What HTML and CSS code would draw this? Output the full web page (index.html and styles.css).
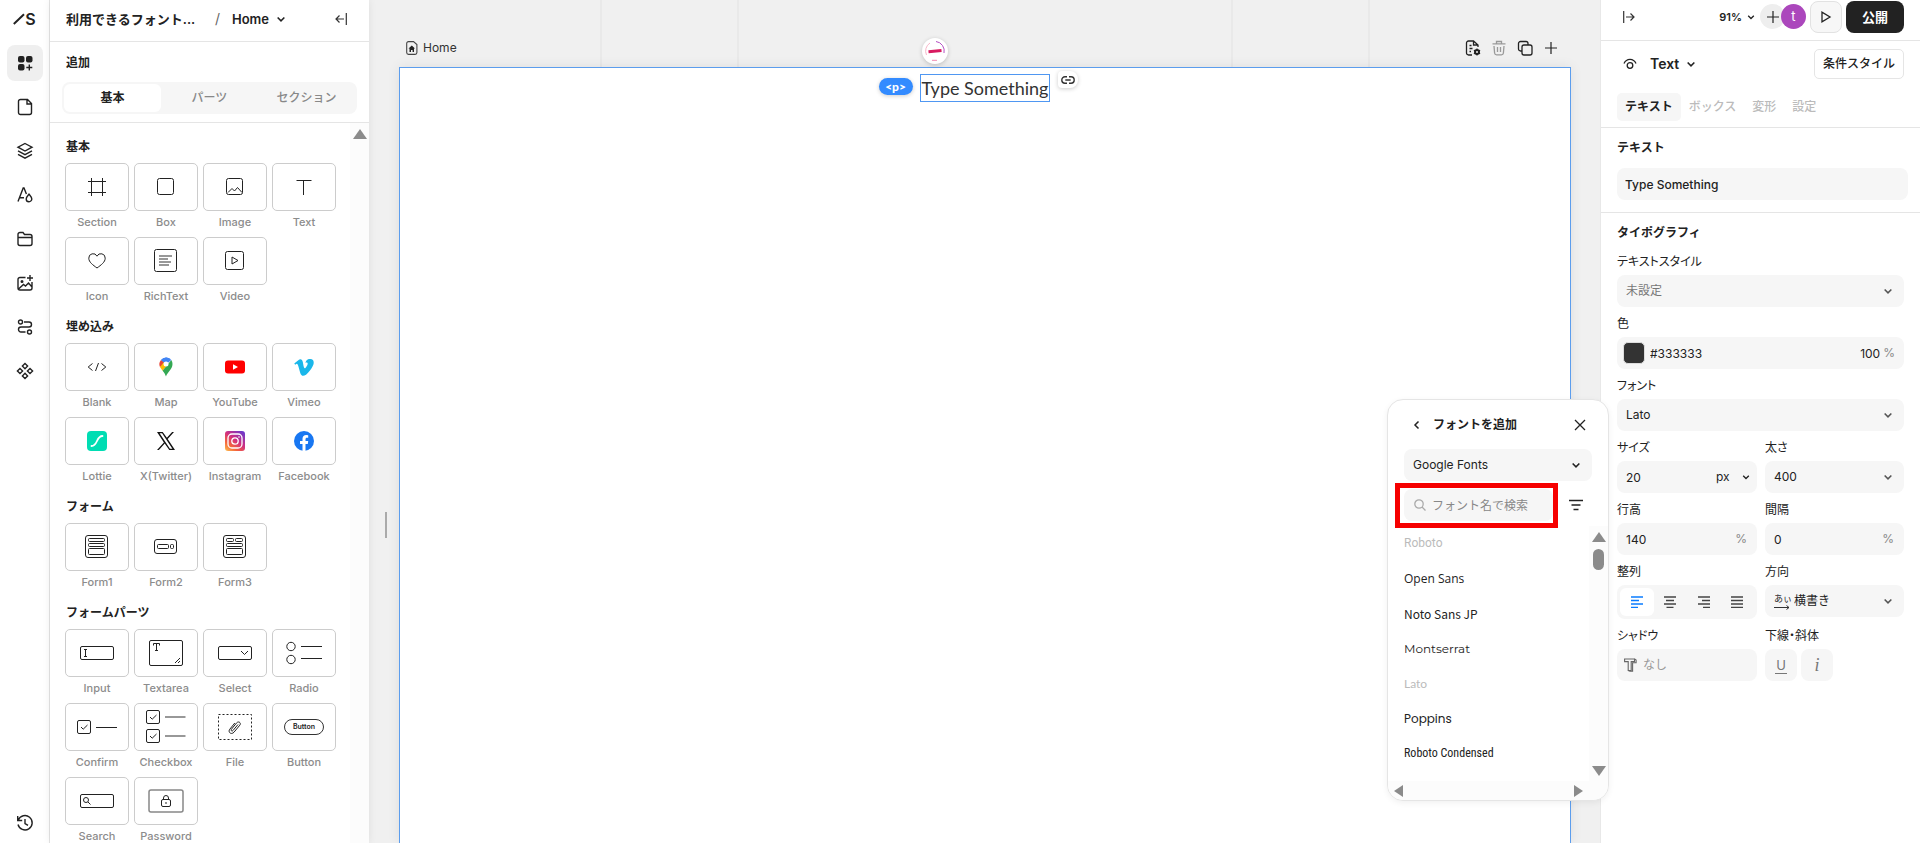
FILE: index.html
```html
<!DOCTYPE html>
<html lang="ja">
<head>
    <meta charset="UTF-8">
    <meta name="viewport" content="width=device-width, initial-scale=1.0">
    <title>Home</title>
    <link rel="stylesheet" href="styles.css">
</head>
<body>
    <!-- shared icons -->
    <svg class="defs" width="0" height="0">
        <symbol id="chevron" viewBox="0 0 10 10"><path d="M2.2 3.700l2.800 2.800 2.800-2.800" fill="none" stroke="currentColor" stroke-width="1.300"/></symbol>
        <symbol id="plus" viewBox="0 0 12 12"><path d="M6 0v12M0 6h12" fill="none" stroke="currentColor" stroke-width="1.200"/></symbol>
        <symbol id="check" viewBox="0 0 14 14"><rect x=".5" y=".5" width="13" height="13" rx="1.5"/><path d="M4 7l2.2 2.2L10.5 5"/></symbol>
    </svg>

    <nav class="rail">
        <a class="logo" href="#" aria-label="Studio"><svg width="12" height="12" viewBox="0 0 12 12"><path d="M.8 11L11 1.2" stroke="#222" stroke-width="2" fill="none"/></svg><span>S</span></a>
        <button class="rail-btn active" aria-label="追加">
            <svg width="16" height="16" viewBox="0 0 16 16" fill="#222"><rect x="1" y="1" width="6.5" height="6.5" rx="2"/><rect x="9" y="1" width="6.5" height="6.5" rx="2"/><rect x="1" y="9" width="6.5" height="6.5" rx="2"/><path d="M11.600 9.500h1.400v2.300h2.300v1.400H13v2.300h-1.400v-2.300H9.300v-1.400h2.300z"/></svg>
        </button>
        <button class="rail-btn" aria-label="ページ">
            <svg width="16" height="18" viewBox="0 0 16 18"><path d="M3.5 1.5h7l4 4v9a2 2 0 0 1-2 2h-9a2 2 0 0 1-2-2v-11a2 2 0 0 1 2-2zM10 1.5V6h4.5"/></svg>
        </button>
        <button class="rail-btn" aria-label="レイヤー">
            <svg width="18" height="18" viewBox="0 0 18 18"><path d="M9 1.5l7 3.7-7 3.8-7-3.8zM2 8.8l7 3.8 7-3.8M2 12.3l7 3.9 7-3.9"/></svg>
        </button>
        <button class="rail-btn" aria-label="スタイル">
            <svg width="18" height="18" viewBox="0 0 18 18"><path d="M2 15.5L7.2 2h.8l2.4 6M3.4 11.7H8M13 8.2c1.500 1.800 2.800 3 2.800 4.700a2.800 2.800 0 0 1-5.600 0c0-1.700 1.300-2.900 2.800-4.700z"/></svg>
        </button>
        <button class="rail-btn" aria-label="ファイル">
            <svg width="18" height="18" viewBox="0 0 18 18"><path d="M2 13.500v-9a2 2 0 0 1 2-2h3l1.500 2H14a2 2 0 0 1 2 2v7a2 2 0 0 1-2 2H4a2 2 0 0 1-2-2zM2 7.500h14"/></svg>
        </button>
        <button class="rail-btn" aria-label="画像">
            <svg width="18" height="18" viewBox="0 0 18 18"><path d="M9.500 3.500H4a2 2 0 0 0-2 2V14a2 2 0 0 0 2 2h10a2 2 0 0 0 2-2V8M2.500 15l5-4.500 2 1.500 3-3L16 13M14 1v6M11 4h6"/><circle cx="6" cy="7.500" r=".8"/></svg>
        </button>
        <button class="rail-btn" aria-label="フロー">
            <svg width="16" height="16" viewBox="0 0 16 16"><circle cx="3.500" cy="3" r="2"/><circle cx="12.500" cy="13" r="2"/><path d="M7 3h5a2.500 2.500 0 0 1 0 5H4a2.500 2.500 0 0 0 0 5h4.500"/></svg>
        </button>
        <button class="rail-btn" aria-label="コンポーネント">
            <svg width="18" height="18" viewBox="0 0 18 18"><path d="M9 1.500l2.600 2.600L9 6.700 6.400 4.100zM4 6.400L6.600 9 4 11.600 1.400 9zM14 6.400L16.600 9 14 11.600 11.400 9zM9 11.300l2.600 2.600L9 16.500l-2.600-2.600z"/></svg>
        </button>
        <button class="rail-btn history" aria-label="履歴">
            <svg width="18" height="18" viewBox="0 0 18 18"><path d="M2.300 6A7.200 7.200 0 1 1 2 10.500M1.700 2v4.500h4.500M9 5v4.500l3 1.800"/></svg>
        </button>
    </nav>

    <aside class="add-panel">
        <header class="panel-head">
            <span class="project">利用できるフォント...</span>
            <span class="slash">/</span>
            <button class="page-btn">Home <svg width="12" height="12"><use href="#chevron"/></svg></button>
            <button class="icon-btn collapse" aria-label="閉じる"><svg width="12" height="12" viewBox="0 0 12 12"><path d="M11.300 0v12M9 6H1M4.500 2.500L1 6l3.500 3.500" fill="none" stroke="#333" stroke-width="1.200"/></svg></button>
        </header>
        <div class="add-head">
            <h2>追加</h2>
            <div class="segment">
                <button class="active">基本</button>
                <button>パーツ</button>
                <button>セクション</button>
            </div>
        </div>
        <div class="scroll">
            <div class="groups">
                <h3>基本</h3>
                <div class="tiles">
                    <button class="tile"><span><svg width="20" height="20" viewBox="0 0 20 20"><path d="M4.500 1v18M15.500 1v18M1 4.500h18M1 15.500h18"/></svg></span>Section</button>
                    <button class="tile"><span><svg width="18" height="18" viewBox="0 0 18 18"><rect x=".5" y=".5" width="16" height="16" rx="2"/></svg></span>Box</button>
                    <button class="tile"><span><svg width="18" height="18" viewBox="0 0 18 18"><rect x=".5" y=".5" width="16" height="16" rx="2"/><path d="M2 14.500l4-4 2.500 2.500 3-3.500 4.500 5"/></svg></span>Image</button>
                    <button class="tile"><span><svg width="16" height="16" viewBox="0 0 16 16"><path d="M.500 1.500h15M7.500 1.500V16"/></svg></span>Text</button>
                    <button class="tile"><span><svg width="18" height="16" viewBox="0 0 18 16"><path d="M9 15C5 12 .8 9.200.8 5.200A4.300 4.300 0 0 1 9 3.200a4.300 4.300 0 0 1 8.200 2C17.200 9.200 13 12 9 15z"/></svg></span>Icon</button>
                    <button class="tile"><span><svg width="24" height="24" viewBox="0 0 24 24"><rect x=".5" y=".5" width="22" height="22" rx="2"/><path d="M5 7h13M5 10h9M5 13h12M5 16h10" stroke="#777" stroke-width="1.600"/></svg></span>RichText</button>
                    <button class="tile"><span><svg width="20" height="20" viewBox="0 0 20 20"><rect x=".5" y=".5" width="18" height="18" rx="2"/><path d="M7 6v7l6-3.500z"/></svg></span>Video</button>
                </div>
                <h3>埋め込み</h3>
                <div class="tiles">
                    <button class="tile"><span><svg width="20" height="10" viewBox="0 0 20 10"><path d="M5.500 1.500L1.200 5l4.300 3.500M14.500 1.500L18.800 5l-4.300 3.500M11.500 1l-3 8"/></svg></span>Blank</button>
                    <button class="tile"><span><svg class="logo-svg" width="14" height="20" viewBox="0 0 14 20"><path d="M7 .5A6.500 6.500 0 0 0 2 3l5 4.500L11.500 2A6.500 6.500 0 0 0 7 .5z" fill="#4285f4"/><path d="M2 3a6.500 6.500 0 0 0-1 7l6-3.500z" fill="#ea4335"/><path d="M1 10l2.600 3.700L10 6.500 5 5z" fill="#fbbc04"/><path d="M3.600 13.700C5.500 16 6 17 7 19.500c1-4 6.500-7 6.500-12.500A6.500 6.500 0 0 0 12.300 3z" fill="#34a853"/><path d="M7 7.500L2 3A6.500 6.500 0 0 1 12.300 3z" fill="#4285f4"/><circle cx="7" cy="7" r="2.500" fill="#fff"/></svg></span>Map</button>
                    <button class="tile"><span><svg class="logo-svg" width="20" height="14" viewBox="0 0 20 14"><rect y=".5" width="20" height="13" rx="3" fill="#f00"/><path d="M8 4.200v5.600L13 7z" fill="#fff"/></svg></span>YouTube</button>
                    <button class="tile"><span><svg class="logo-svg" width="20" height="17" viewBox="0 0 24 21"><path d="M24 4.800c-.1 2.300-1.700 5.500-4.900 9.600C15.800 18.700 13 20.800 10.800 20.800c-1.400 0-2.600-1.300-3.500-3.900L5.300 9.800C4.600 7.200 3.800 5.900 3 5.900c-.2 0-.8.400-1.900 1.100L0 5.600C3.200 2.800 5.600.4 7.100.2c1.900-.2 3 1.100 3.500 3.800C11.700 10.500 12.200 11.500 13.200 11.500c.8 0 3.200-3.900 3.300-5.300.2-2-1.500-2-2.900-1.400C14.700 1.300 16.800-.5 19.900 0c2.800.2 4.200 1.700 4.100 4.800z" fill="#1ab7ea"/></svg></span>Vimeo</button>
                    <button class="tile"><span><svg class="logo-svg" width="20" height="20" viewBox="0 0 20 20"><rect width="20" height="20" rx="4" fill="#00ddb3"/><path d="M4.500 15c6.500 0 4.500-10 11-10" fill="none" stroke="#fff" stroke-width="1.800" stroke-linecap="round"/></svg></span>Lottie</button>
                    <button class="tile"><span><svg class="logo-svg" width="18" height="18" viewBox="0 0 18 18"><path d="M0 0h5.700l4.200 5.700L15.100 0h1.900l-6.300 6.900L18 18h-5.700L7.700 11.600 1.900 18H0l6.900-7.500zM2.600 1.300l10.300 15.400h2.500L5.100 1.300z" fill="#111" fill-rule="evenodd"/></svg></span>X(Twitter)</button>
                    <button class="tile"><span><svg class="logo-svg" width="20" height="20" viewBox="0 0 20 20"><defs><linearGradient id="insta" x1="0" y1="1" x2=".8" y2="0"><stop offset="0" stop-color="#fec04f"/><stop offset=".3" stop-color="#f4643c"/><stop offset=".6" stop-color="#d12f80"/><stop offset="1" stop-color="#7038c8"/></linearGradient></defs><rect width="20" height="20" rx="3" fill="url(#insta)"/><g fill="none" stroke="#fff" stroke-width="1.300"><rect x="3" y="3" width="14" height="14" rx="4"/><circle cx="10" cy="10" r="3.200"/></g><circle cx="14" cy="6" r=".8" fill="#fff"/></svg></span>Instagram</button>
                    <button class="tile"><span><svg class="logo-svg" width="20" height="20" viewBox="0 0 20 20"><circle cx="10" cy="10" r="10" fill="#1877f2"/><path d="M8.500 20v-7H6v-3h2.500V7.800C8.500 5.300 10 4 12.200 4l2 .2v2.500H13c-1.100 0-1.500.7-1.500 1.400V10h2.700l-.4 3h-2.300v7z" fill="#fff"/></svg></span>Facebook</button>
                </div>
                <h3>フォーム</h3>
                <div class="tiles">
                    <button class="tile"><span><svg width="24" height="24" viewBox="0 0 24 24"><rect x=".5" y=".5" width="22" height="22" rx="2.500"/><rect x="3.500" y="3.500" width="16" height="3" rx="1"/><rect x="3.500" y="8.500" width="16" height="3" rx="1"/><rect x="3.500" y="13.500" width="16" height="6" rx="1"/></svg></span>Form1</button>
                    <button class="tile"><span><svg width="24" height="16" viewBox="0 0 24 16"><rect x=".5" y=".5" width="22" height="14" rx="2.500"/><rect x="3.500" y="5.500" width="11" height="4" rx="1"/><rect x="16.500" y="5.500" width="3" height="4" rx="1"/></svg></span>Form2</button>
                    <button class="tile"><span><svg width="24" height="24" viewBox="0 0 24 24"><rect x=".5" y=".5" width="22" height="22" rx="2.500"/><rect x="3.500" y="3.500" width="7" height="3" rx="1"/><rect x="12.500" y="3.500" width="7" height="3" rx="1"/><rect x="3.500" y="8.500" width="16" height="3" rx="1"/><rect x="3.500" y="13.500" width="16" height="6" rx="1"/></svg></span>Form3</button>
                </div>
                <h3>フォームパーツ</h3>
                <div class="tiles">
                    <button class="tile"><span><svg width="34" height="14" viewBox="0 0 34 14"><rect x=".5" y=".5" width="33" height="13" rx="1.500"/><path d="M4 3.500h3M4 10.500h3M5.500 3.500v7"/></svg></span>Input</button>
                    <button class="tile"><span><svg width="34" height="26" viewBox="0 0 34 26"><rect x=".5" y=".5" width="33" height="25" rx="1.500"/><path d="M4.500 5.500v-2h6v2M7.500 3.500v7M6 10.500h3M26 23l5-5M29 23l2-2"/></svg></span>Textarea</button>
                    <button class="tile"><span><svg width="34" height="14" viewBox="0 0 34 14"><rect x=".5" y=".5" width="33" height="13" rx="1.500"/><path d="M23 5l3.500 3.500L30 5"/></svg></span>Select</button>
                    <button class="tile"><span><svg width="36" height="24" viewBox="0 0 36 24"><circle cx="5" cy="5.500" r="4.200"/><circle cx="5" cy="18.500" r="4.200"/><path d="M15 5.500h21M15 17.500h21"/></svg></span>Radio</button>
                    <button class="tile"><span><svg width="40" height="14" viewBox="0 0 40 14"><use href="#check" width="14" height="14"/><path d="M19 7.500h21"/></svg></span>Confirm</button>
                    <button class="tile"><span><svg width="40" height="34" viewBox="0 0 40 34"><use href="#check" width="14" height="14"/><use href="#check" y="19" width="14" height="14"/><path d="M19 7h20.500M19 26h20.500" stroke="#777" stroke-width="1.600"/></svg></span>Checkbox</button>
                    <button class="tile"><span><svg width="34" height="26" viewBox="0 0 34 26"><rect x=".5" y=".5" width="33" height="25" stroke-dasharray="2 2"/><path d="M20 10.500l-5 6c-1 1.200-2.500 0-1.600-1.200l5.200-6.400c2-2.200 5 0 3.200 2.300l-5.800 7c-2.600 3-6.500 0-4.200-3l5-6.200"/></svg></span>File</button>
                    <button class="tile"><span><b class="mini-btn">Button</b></span>Button</button>
                    <button class="tile"><span><svg width="34" height="14" viewBox="0 0 34 14"><rect x=".5" y=".5" width="33" height="13" rx="1.500"/><circle cx="6" cy="6" r="2.500"/><path d="M8 8l2.500 2.500"/></svg></span>Search</button>
                    <button class="tile"><span><svg width="36" height="24" viewBox="0 0 36 24"><rect x="1" y="1" width="34" height="22" rx="2" stroke="#888" stroke-width="1.500"/><rect x="13.500" y="10.500" width="9" height="7" rx="1.500"/><path d="M15.500 10.500v-1.500a2.500 2.500 0 0 1 5 0v1.500M18 13v2"/></svg></span>Password</button>
                </div>
            </div>
            <div class="bar-v"><i class="up"></i></div>
        </div>
    </aside>

    <main class="canvas">
        <div class="guide wide"></div>
        <div class="guide narrow"></div>
        <div class="canvas-head">
            <span class="page-name"><svg width="12" height="14" viewBox="0 0 12 14"><path d="M2.500.6h5l3.400 3v8a1.800 1.800 0 0 1-1.800 1.800H2.500A1.800 1.800 0 0 1 .7 11.600V2.400A1.800 1.800 0 0 1 2.500.6z" fill="none" stroke="#444" stroke-width="1.100"/><path d="M5.800 4.500L2.500 7.500h1V11H5V9h1.600v2H8V7.500h1z" fill="#222"/></svg>Home</span>
            <div class="tools">
                <button class="icon-btn" aria-label="ページ設定"><svg width="16" height="16" viewBox="0 0 16 16" fill="none" stroke="#222" stroke-width="1.300"><path d="M7 15H3.500A2 2 0 0 1 1.500 13V3a2 2 0 0 1 2-2h5L13 5v2M8.500 1v4H13M4.500 5.500h2M4.500 8.500h3M4.500 11.500h1.500"/><circle cx="12" cy="12" r="2" stroke-width="2"/><path d="M12 8.500v7M8.900 10.200l6.200 3.600M15.100 10.200l-6.200 3.600" stroke-width="1.200"/><circle cx="12" cy="12" r="1" fill="#f0f0f0" stroke="none"/></svg></button>
                <button class="icon-btn" aria-label="削除"><svg width="16" height="16" viewBox="0 0 16 16" fill="none" stroke="#999" stroke-width="1.300"><path d="M1.500 3.800h13M5.500 3.800V1.500h5v2.300M3 6l.6 7a2 2 0 0 0 2 1.800h4.800a2 2 0 0 0 2-1.800L13 6M6.500 7v5M9.500 7v5"/></svg></button>
                <button class="icon-btn" aria-label="複製"><svg width="16" height="16" viewBox="0 0 16 16" fill="none" stroke="#222" stroke-width="1.300"><rect x="5" y="5" width="10" height="10" rx="2"/><path d="M5 11H3.500A2 2 0 0 1 1.500 9V3.500a2 2 0 0 1 2-2H9a2 2 0 0 1 2 2V5"/></svg></button>
                <button class="icon-btn" aria-label="追加"><svg width="12" height="12"><use href="#plus"/></svg></button>
            </div>
        </div>
        <div class="frame">
            <div class="selected">
                <span class="badge logo-badge"><svg width="22" height="22" viewBox="0 0 22 22" fill="none"><path d="M2.500 15A9.500 9.500 0 0 1 6 3" stroke="#f7b6c8"/><path d="M12 1.500A9.500 9.500 0 0 1 20 13" stroke="#b44fc4"/><path d="M8 20.300h5" stroke="#f08ab0"/><path d="M4.500 11.800l13-1.200" stroke="#d81b60" stroke-width="3"/></svg></span>
                <span class="badge tag">&lt;p&gt;</span>
                <p>Type Something</p>
                <span class="badge link-badge"><svg width="14" height="8" viewBox="0 0 14 8" fill="none" stroke="#333" stroke-width="1.400"><path d="M6 .8H4a3.200 3.200 0 0 0 0 6.400h2M8 .8h2a3.200 3.200 0 0 1 0 6.400H8M4.300 4h5.400"/></svg></span>
            </div>
        </div>
        <div class="resize"></div>
    </main>

    <aside class="props">
        <header class="props-head">
            <button class="icon-btn" aria-label="閉じる"><svg width="12" height="12" viewBox="0 0 12 12"><path d="M.7 0v12M3 6h8M7.500 2.500L11 6l-3.500 3.500" fill="none" stroke="#333" stroke-width="1.200"/></svg></button>
            <button class="zoom-btn">91% <svg width="10" height="10"><use href="#chevron"/></svg></button>
            <button class="invite" aria-label="招待"><svg width="12" height="12"><use href="#plus"/></svg></button>
            <span class="avatar">t</span>
            <button class="play" aria-label="プレビュー"><svg width="12" height="12" viewBox="0 0 12 12"><path d="M2 1.200v9.600L10 6z" fill="none" stroke="#222" stroke-width="1.300"/></svg></button>
            <button class="publish">公開</button>
        </header>
        <div class="element-row">
            <svg width="14" height="12" viewBox="0 0 14 12" fill="none" stroke="#222" stroke-width="1.300"><path d="M1 5.500C3.500 0 10.500 0 13 5.500"/><circle cx="7" cy="7.500" r="2.800"/></svg>
            <button class="element-btn">Text <svg width="12" height="12"><use href="#chevron"/></svg></button>
            <button class="cond">条件スタイル</button>
        </div>
        <div class="tabs">
            <button class="active">テキスト</button>
            <button>ボックス</button>
            <button>変形</button>
            <button>設定</button>
        </div>
        <section class="text-section">
            <h3><label for="content">テキスト</label></h3>
            <input class="control" id="content" type="text" value="Type Something">
        </section>
        <section class="typo">
            <h3>タイポグラフィ</h3>
            <div class="field full">
                <label for="style">テキストスタイル</label>
                <div class="control muted"><select id="style"><option>未設定</option></select><svg width="12" height="12"><use href="#chevron"/></svg></div>
            </div>
            <div class="field full">
                <label for="color">色</label>
                <div class="control color"><i class="swatch"></i><input id="color" type="text" value="#333333"><input class="alpha" type="text" value="100" aria-label="不透明度"><span class="unit">%</span></div>
            </div>
            <div class="field full">
                <label for="font">フォント</label>
                <div class="control"><select id="font"><option>Lato</option></select><svg width="12" height="12"><use href="#chevron"/></svg></div>
            </div>
            <div class="field">
                <label for="size">サイズ</label>
                <div class="control size"><input id="size" type="text" value="20"><select class="px" aria-label="単位"><option>px</option></select><svg width="10" height="10"><use href="#chevron"/></svg></div>
            </div>
            <div class="field">
                <label for="weight">太さ</label>
                <div class="control"><select id="weight"><option>400</option></select><svg width="12" height="12"><use href="#chevron"/></svg></div>
            </div>
            <div class="field">
                <label for="line">行高</label>
                <div class="control"><input id="line" type="text" value="140"><span class="unit">%</span></div>
            </div>
            <div class="field">
                <label for="spacing">間隔</label>
                <div class="control"><input id="spacing" type="text" value="0"><span class="unit">%</span></div>
            </div>
            <div class="field">
                <span class="label">整列</span>
                <div class="align">
                    <button class="active" aria-label="左"><svg width="14" height="12" viewBox="0 0 14 12"><path d="M1 1h12M1 4.500h8M1 8h12M1 11.500h7"/></svg></button>
                    <button aria-label="中央"><svg width="14" height="12" viewBox="0 0 14 12"><path d="M1 1h12M3 4.500h8M1 8h12M3.500 11.500h7"/></svg></button>
                    <button aria-label="右"><svg width="14" height="12" viewBox="0 0 14 12"><path d="M1 1h12M5 4.500h8M1 8h12M6 11.500h7"/></svg></button>
                    <button aria-label="両端"><svg width="14" height="12" viewBox="0 0 14 12"><path d="M1 1h12M1 4.500h12M1 8h12M1 11.500h12"/></svg></button>
                </div>
            </div>
            <div class="field">
                <label for="dir">方向</label>
                <div class="control"><span class="dir-icon">あぃ<svg width="16" height="5" viewBox="0 0 16 5"><path d="M0 2.500h15M12.500.5l2.500 2-2.500 2" fill="none" stroke="#333"/></svg></span><select id="dir"><option>横書き</option></select><svg width="12" height="12"><use href="#chevron"/></svg></div>
            </div>
            <div class="field">
                <span class="label">シャドウ</span>
                <button class="control shadow"><svg width="13" height="14" viewBox="0 0 13 14"><path d="M.6 1h9.900v2.600H7.200v8.900H4.200V3.600H.6z" fill="none" stroke="#666" stroke-width="1.100"/><path d="M10.500 1l1.600 1v2.800H8.600v8.500H6L4.200 12.500" fill="none" stroke="#666" stroke-width="1.100"/></svg>なし</button>
            </div>
            <div class="field">
                <span class="label">下線・斜体</span>
                <div class="deco"><button class="u" aria-label="下線"><span>U</span></button><button class="it" aria-label="斜体">i</button></div>
            </div>
        </section>
    </aside>

    <div class="popover">
        <div class="pop-head">
            <button class="icon-btn back" aria-label="戻る"><svg width="12" height="12" viewBox="0 0 12 12"><path d="M7.500 2.500L4 6l3.500 3.500" fill="none" stroke="#222" stroke-width="1.500"/></svg></button>
            <h3>フォントを追加</h3>
            <button class="icon-btn" aria-label="閉じる"><svg width="12" height="12" viewBox="0 0 12 12"><path d="M1 1l10 10M11 1L1 11" fill="none" stroke="#222" stroke-width="1.300"/></svg></button>
        </div>
        <div class="control source"><select aria-label="提供元"><option>Google Fonts</option></select><svg width="12" height="12"><use href="#chevron"/></svg></div>
        <div class="search-row">
            <label class="control search"><svg width="12" height="12" viewBox="0 0 12 12"><circle cx="5" cy="5" r="4.200" fill="none" stroke="#aaa" stroke-width="1.300"/><path d="M8 8l3.500 3.500" stroke="#aaa" stroke-width="1.300"/></svg><input type="text" placeholder="フォント名で検索" aria-label="フォント名で検索"></label>
            <button class="icon-btn" aria-label="絞り込み"><svg width="14" height="12" viewBox="0 0 14 12"><path d="M0 1.500h14M2.500 6h9M4.500 10.500h5" stroke="#222" stroke-width="1.700"/></svg></button>
            <div class="highlight"></div>
        </div>
        <div class="pop-body">
            <ul class="fonts">
                <li class="used f-roboto">Roboto</li>
                <li class="f-open">Open Sans</li>
                <li class="f-noto">Noto Sans JP</li>
                <li class="f-mont">Montserrat</li>
                <li class="used f-lato">Lato</li>
                <li class="f-pop">Poppins</li>
                <li class="f-cond">Roboto Condensed</li>
            </ul>
            <div class="bar-v"><i class="up"></i><i class="thumb"></i><i class="down"></i></div>
        </div>
        <div class="bar-h"><i class="left"></i><i class="right"></i></div>
    </div>
</body>
</html>
```

FILE: styles.css
```css
* { box-sizing: border-box; }
body { display: flex; height: 100vh; margin: 0; overflow: hidden; background: #fff; color: #222; font-family: Inter, "Noto Sans CJK JP", sans-serif; font-size: 12px; line-height: 16px; }
button, input, select { font: inherit; color: inherit; border: 0; background: none; padding: 0; margin: 0; outline: none; }
button { cursor: pointer; }
select { appearance: none; }
h2, h3, p, ul { margin: 0; padding: 0; }
h2, h3 { font-size: 12px; font-weight: 700; line-height: 16px; }
svg { display: block; flex: none; }
.defs { position: absolute; }
.icon-btn { display: flex; align-items: center; justify-content: center; }

/* left rail */
.rail { flex: none; display: flex; flex-direction: column; align-items: center; gap: 8px; width: 50px; padding-bottom: 2px; border-right: 1px solid #e5e5e5; }
.logo { display: flex; align-items: center; height: 37px; color: #222; font-size: 16px; font-weight: 600; text-decoration: none; }
.rail-btn { display: flex; align-items: center; justify-content: center; flex: none; width: 36px; height: 36px; border-radius: 8px; }
.rail-btn.active { background: #efefef; }
.rail-btn svg { fill: none; stroke: #222; stroke-width: 1.4; }
.rail-btn.active svg { fill: #222; stroke: none; }
.history { margin-top: auto; }

/* add panel */
.add-panel { flex: none; display: flex; flex-direction: column; width: 319px; z-index: 1; box-shadow: 0 0 8px rgba(0, 0, 0, .08); background: #fff; }
.panel-head { display: flex; align-items: center; flex: none; height: 42px; padding: 0 22px 4px 16px; border-bottom: 1px solid #e5e5e5; }
.project { width: 149px; font-size: 13px; font-weight: 600; white-space: nowrap; }
.slash { width: 17px; color: #666; font-size: 14px; }
.page-btn { display: flex; align-items: center; gap: 6px; font-size: 13px; font-weight: 600; }
.collapse { margin-left: auto; }
.add-head { display: flex; flex-direction: column; flex: none; gap: 11px; padding: 13px 12px 8px; border-bottom: 1px solid #e5e5e5; }
.add-head h2 { padding-left: 4px; font-weight: 600; }
.segment { display: flex; padding: 2px; border-radius: 8px; background: #f6f6f6; }
.segment button { flex: 1; height: 28px; border-radius: 6px; color: #888; font-weight: 500; }
.segment .active { background: #fff; color: #222; font-weight: 600; }
.scroll { display: flex; flex: 1; min-height: 0; overflow: hidden; }
.groups { flex: 1; padding: 8px 0 0 15px; }
.groups h3 { height: 32px; padding: 8px 0 0 1px; }
.tiles { display: grid; grid-template-columns: repeat(4, 64px); column-gap: 5px; }
.tile { display: flex; flex-direction: column; align-items: center; gap: 3px; height: 74px; color: #8c8c8c; font-size: 11px; font-weight: 500; }
.tile > span { display: flex; align-items: center; justify-content: center; width: 64px; height: 48px; border: 1px solid #ccc; border-radius: 5px; }
.tile svg { fill: none; stroke: #222; stroke-width: 1; }
.tile .logo-svg { stroke: none; }
.mini-btn { padding: 0 8px; border: 1px solid #333; border-radius: 8px; color: #222; font-size: 7px; font-weight: 600; line-height: 14px; }
.bar-v { display: flex; flex-direction: column; align-items: center; flex: none; width: 19px; padding-top: 6px; background: #fcfcfc; }
.up, .down { border: solid transparent; border-width: 0 7px; }
.up { border-bottom: 10px solid #8b8b8b; }
.down { border-top: 10px solid #8b8b8b; }

/* canvas */
.canvas { position: relative; display: flex; flex: 1; flex-direction: column; min-width: 0; padding: 0 29px 0 30px; background: #f0f0f0; overflow: hidden; }
.guide { position: absolute; top: 0; bottom: 0; left: 50%; border: solid #e9e9e9; border-width: 0 2px; transform: translateX(-50%); }
.wide { width: 770px; }
.narrow { width: 496px; }
.canvas-head { position: relative; display: flex; align-items: center; justify-content: space-between; flex: none; height: 67px; padding: 29px 12px 0 7px; }
.page-name { display: flex; align-items: center; gap: 5px; color: #333; }
.tools { display: flex; align-items: center; gap: 10px; }
.tools .icon-btn { width: 16px; }
.frame { position: relative; display: flex; flex: 1; justify-content: center; align-items: flex-start; padding-top: 6px; border: 1px solid #5c9ded; border-bottom: 0; background: #fff; box-shadow: 0 0 12px rgba(0, 0, 0, .08); }
.selected { position: relative; border: 1px solid #4f97f2; }
.selected p { padding: 0 1px; color: #333; font: 18px/26px Lato, sans-serif; }
.badge { position: absolute; display: flex; align-items: center; justify-content: center; background: #fff; box-shadow: 0 1px 4px rgba(0, 0, 0, .2); }
.logo-badge { left: 1px; top: -37px; width: 26px; height: 26px; border-radius: 50%; }
.tag { left: -42px; top: 3px; width: 34px; height: 17px; border-radius: 9px; background: #338bff; color: #fff; font: 900 12px/16px Lato, sans-serif; }
.link-badge { left: 137px; top: -4px; width: 20px; height: 17px; border-radius: 4px 8px 8px 4px; }
.resize { position: absolute; top: 512px; left: 16px; width: 2px; height: 26px; background: #aaa; }

/* properties */
.props { flex: none; width: 320px; z-index: 1; border-left: 1px solid #e8e8e8; background: #fff; }
.props-head { display: flex; align-items: center; height: 41px; padding: 0 16px 7px 22px; border-bottom: 1px solid #e5e5e5; }
.zoom-btn { display: flex; align-items: center; gap: 4px; margin-left: auto; font-size: 11px; font-weight: 600; }
.invite { display: flex; align-items: center; justify-content: center; width: 25px; height: 25px; margin-left: 4px; border-radius: 50%; background: #eee; }
.avatar { width: 25px; margin: 0 4px 0 -4px; border-radius: 50%; background: #ab47bc; color: #fff; font-size: 13px; line-height: 25px; text-align: center; }
.play { display: flex; align-items: center; justify-content: center; width: 32px; height: 32px; margin-right: 4px; border: 1px solid #e2e2e2; border-radius: 8px; background: #f7f7f7; }
.publish { width: 58px; height: 32px; border-radius: 8px; background: #222; color: #fff; font-size: 13px; font-weight: 700; }
.element-row { display: flex; align-items: center; height: 46px; padding: 0 16px 0 22px; }
.element-btn { display: flex; align-items: center; gap: 6px; margin-left: 13px; font-size: 14px; font-weight: 600; }
.cond { width: 90px; height: 30px; margin-left: auto; border: 1px solid #e5e5e5; border-radius: 5px; font-weight: 500; }
.tabs { display: flex; height: 41px; padding: 6px 16px 0; border-bottom: 1px solid #e5e5e5; }
.tabs button { height: 28px; padding: 0 8px; border-radius: 5px; color: #bbb; font-weight: 500; }
.tabs .active { background: #f6f6f6; color: #222; font-weight: 600; }
.text-section { padding: 12px 12px 12px 16px; border-bottom: 1px solid #e5e5e5; }
.text-section h3 { margin-bottom: 12px; }
.control { display: flex; align-items: center; width: 100%; height: 32px; padding: 0 10px 0 9px; border-radius: 8px; background: #f6f6f6; }
.control input, .control select { flex: 1; min-width: 0; width: 100%; height: 100%; }
.control svg { color: #555; }
.text-section .control { padding-left: 8px; font-weight: 500; }
.typo { display: grid; grid-template-columns: 140px 139px; column-gap: 8px; padding: 0 16px; }
.typo h3 { grid-column: 1 / -1; height: 32px; padding-top: 12px; }
.full { grid-column: 1 / -1; }
.field > label, .label { display: block; height: 30px; padding-top: 9px; font-feature-settings: "palt"; }
.control .unit { color: #888; }
.control.size { padding-right: 6px; }
.size svg { color: #222; }
.field .size .px { flex: none; width: 25px; }
.muted { color: #777; }
.control.color { gap: 3px; padding: 0 9px 0 6px; }
.swatch { flex: none; width: 22px; height: 22px; margin-right: 2px; border: 1px solid #ddd; border-radius: 5px; background: #333; }
.field .alpha { flex: none; width: 30px; text-align: right; }
.align { display: flex; padding: 3px; border-radius: 8px; background: #f6f6f6; }
.align button { display: flex; flex: 1; align-items: center; justify-content: center; height: 28px; border-radius: 6px; }
.align .active { background: #fff; }
.align svg { stroke: #444; stroke-width: 1.3; }
.align .active svg { stroke: #0a7cff; }
.dir-icon { flex: none; width: 20px; font-size: 9px; line-height: 12px; }
.control.shadow { gap: 6px; padding-left: 7px; color: #999; font-size: 12px; }
.deco { display: flex; gap: 4px; }
.deco button { width: 32px; height: 32px; border-radius: 8px; background: #f6f6f6; color: #777; font-size: 13px; }
.u span { display: inline-block; padding: 0 1px; border-bottom: 1px solid #777; line-height: 15px; }
.deco .it { font: italic 18px "Liberation Serif", serif; }

/* add font popover */
.popover { position: absolute; z-index: 2; right: 311px; bottom: 42px; display: flex; flex-direction: column; width: 222px; height: 402px; border: 1px solid #e5e5e5; border-radius: 16px; background: #fff; box-shadow: 0 2px 6px rgba(0, 0, 0, .06); overflow: hidden; }
.pop-head { display: flex; align-items: center; height: 49px; padding: 0 22px 0 23px; }
.pop-head h3 { flex: 1; margin-left: 10px; font-weight: 600; }
.popover .control svg { color: #222; }
.source { width: 188px; margin: 0 16px 8px; flex: none; }
.search-row { position: relative; display: flex; align-items: center; flex: none; padding: 0 25px 0 16px; margin-bottom: 5px; }
.search { width: 149px; margin-right: auto; gap: 6px; padding: 0 4px 0 10px; }
.search input::placeholder { color: #888; opacity: 1; }
.highlight { position: absolute; left: 7px; top: -6px; width: 163px; height: 45px; border: 5px solid #f60000; }
.pop-body { display: flex; flex: 1; min-height: 0; }
.fonts { flex: 1; list-style: none; padding-left: 16px; }
.fonts li { height: 35px; line-height: 35px; white-space: nowrap; }
.fonts .used { color: #bbb; }
.f-roboto { font-family: Roboto, sans-serif; }
.f-open { font-family: "Open Sans", sans-serif; }
.f-noto { font-family: "Noto Sans CJK JP", sans-serif; }
.f-mont { font-family: Montserrat, Inter, sans-serif; }
.f-lato { font-family: Lato, sans-serif; }
.f-pop { font-family: Poppins, Inter, sans-serif; }
.f-cond { font-family: "Roboto Condensed", "Liberation Sans Narrow", Roboto, sans-serif; }
.thumb { width: 11px; height: 21px; margin-top: 7px; border-radius: 6px; background: #8b8b8b; }
.pop-body .down { margin: auto 0 5px; }
.bar-h { display: flex; align-items: center; justify-content: space-between; flex: none; height: 19px; padding: 0 25px 0 6px; background: #fcfcfc; }
.left, .right { border: solid transparent; border-width: 6px 0; }
.left { border-right: 9px solid #8b8b8b; }
.right { border-left: 9px solid #8b8b8b; }
```
